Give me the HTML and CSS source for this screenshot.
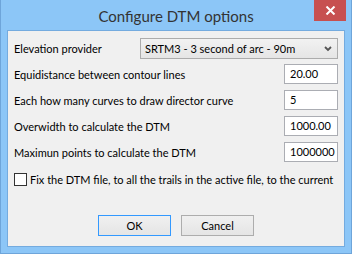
FILE: index.html
```html
<!DOCTYPE html>
<html lang="en">
<head>
    <meta charset="UTF-8">
    <title>Configure DTM options</title>
    <link rel="stylesheet" href="styles.css">
</head>
<body>
    <div class="window">
        <div class="titlebar">
            <span class="title">Configure DTM options</span>
            <span class="close">
                <svg width="11" height="9" viewBox="0 0 11 9">
                    <path d="M1.5 0.5 L9.5 8.5 M9.5 0.5 L1.5 8.5" stroke="#fff" stroke-width="2"/>
                </svg>
            </span>
        </div>

        <div class="client">
            <div class="row row-combo">
                <label>Elevation provider</label>
                <div class="combo">
                    <span>SRTM3 - 3 second of arc - 90m</span>
                    <svg width="8" height="6" viewBox="0 0 8 6">
                        <path d="M1 1 L4 4 L7 1" stroke="#555" stroke-width="1.8" fill="none"/>
                    </svg>
                </div>
            </div>
            <div class="row">
                <label>Equidistance between contour lines</label>
                <div class="field">20.00</div>
            </div>
            <div class="row">
                <label>Each how many curves to draw director curve</label>
                <div class="field">5</div>
            </div>
            <div class="row">
                <label>Overwidth to calculate the DTM</label>
                <div class="field">1000.00</div>
            </div>
            <div class="row">
                <label>Maximun points to calculate the DTM</label>
                <div class="field">1000000</div>
            </div>
            <div class="check-row">
                <span class="checkbox"></span>
                <span>Fix the DTM file, to all the trails in the active file, to the current</span>
            </div>

            <div class="buttons">
                <span class="btn btn-default">OK</span>
                <span class="btn">Cancel</span>
            </div>
        </div>
    </div>
</body>
</html>
```

FILE: styles.css
```css
* {
    margin: 0;
    padding: 0;
    box-sizing: border-box;
}

body {
    font-family: Lato, "Liberation Sans", sans-serif;
    font-size: 11px;
    color: #000;
    background: #fff;
}

.window {
    width: 352px;
    height: 254px;
    background: #8cc6f7;
    border: 1px solid #6ea5da;
    border-top: none;
    padding: 0 6px 6px 6px;
    display: flex;
    flex-direction: column;
}

.titlebar {
    height: 30px;
    display: grid;
    grid-template-areas: "bar";
    margin: 0 -6px;
}

.title {
    grid-area: bar;
    justify-self: center;
    align-self: center;
    font-size: 15px;
    color: #333;
    margin-top: 1px;
}

.close {
    grid-area: bar;
    justify-self: end;
    align-self: start;
    width: 32px;
    height: 21px;
    margin-right: 5px;
    background: #c75050;
    display: flex;
    align-items: center;
    justify-content: center;
}

.client {
    flex: 1;
    background: #f0f0f0;
    border: 1px solid #74abdf;
    padding: 7px 6px 0 6px;
    display: flex;
    flex-direction: column;
    gap: 6px;
}

.row {
    display: flex;
    align-items: center;
    justify-content: space-between;
    height: 20px;
}

.row-combo {
    height: 21px;
    margin-bottom: -1px;
}

.combo {
    width: 198px;
    height: 21px;
    border: 1px solid #acacac;
    background: linear-gradient(#f2f2f2, #e5e5e5);
    display: flex;
    align-items: center;
    justify-content: space-between;
    padding: 0 5px 0 4px;
}

.field {
    width: 54px;
    height: 20px;
    background: #fff;
    border: 1px solid #abadb3;
    padding-left: 5px;
    line-height: 18px;
}

.check-row {
    display: flex;
    align-items: center;
    gap: 3px;
    height: 14px;
    margin-top: 4px;
    white-space: nowrap;
}

.checkbox {
    width: 13px;
    height: 13px;
    border: 1px solid #333;
    background: #fff;
}

.buttons {
    display: flex;
    justify-content: center;
    gap: 10px;
    margin-top: 23px;
}

.btn {
    width: 73px;
    height: 21px;
    border: 1px solid #adadad;
    background: linear-gradient(#f0f0f0, #e5e5e5);
    display: flex;
    align-items: center;
    justify-content: center;
}

.btn-default {
    border-color: #3399ff;
}
```
